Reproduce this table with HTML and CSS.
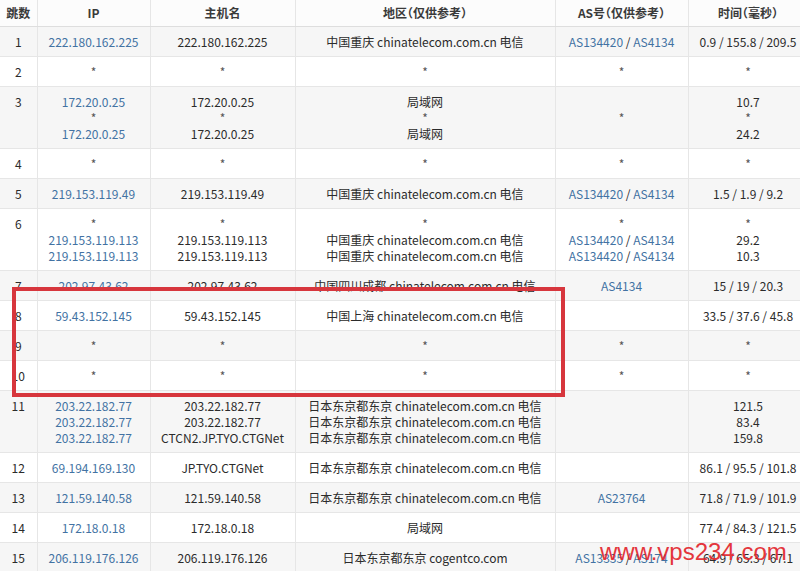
FILE: index.html
```html
<!DOCTYPE html>
<html>
	<head>
		<meta charset="utf-8">
		<title>路由追踪</title>
		<link rel="stylesheet" href="styles.css">
	</head>
	<body>
		<div class="trace">
			<table class="hops">
				<colgroup>
					<col class="c-hop">
					<col class="c-ip">
					<col class="c-host">
					<col class="c-region">
					<col class="c-as">
					<col class="c-time">
				</colgroup>
				<thead>
					<tr>
						<th>跳数</th>
						<th>IP</th>
						<th>主机名</th>
						<th>地区（仅供参考）</th>
						<th>AS号（仅供参考）</th>
						<th>时间（毫秒）</th>
					</tr>
				</thead>
				<tbody>
					<tr>
						<td>1</td>
						<td><a>222.180.162.225</a></td>
						<td>222.180.162.225</td>
						<td>中国重庆 chinatelecom.com.cn 电信</td>
						<td><a>AS134420</a> / <a>AS4134</a></td>
						<td>0.9 / 155.8 / 209.5</td>
					</tr>
					<tr>
						<td>2</td>
						<td class="star">*</td>
						<td class="star">*</td>
						<td class="star">*</td>
						<td class="star">*</td>
						<td class="star">*</td>
					</tr>
					<tr>
						<td>3</td>
						<td><a>172.20.0.25</a><br><span class="star">*</span><br><a>172.20.0.25</a></td>
						<td>172.20.0.25<br><span class="star">*</span><br>172.20.0.25</td>
						<td>局域网<br><span class="star">*</span><br>局域网</td>
						<td class="star">*</td>
						<td>10.7<br><span class="star">*</span><br>24.2</td>
					</tr>
					<tr>
						<td>4</td>
						<td class="star">*</td>
						<td class="star">*</td>
						<td class="star">*</td>
						<td class="star">*</td>
						<td class="star">*</td>
					</tr>
					<tr>
						<td>5</td>
						<td><a>219.153.119.49</a></td>
						<td>219.153.119.49</td>
						<td>中国重庆 chinatelecom.com.cn 电信</td>
						<td><a>AS134420</a> / <a>AS4134</a></td>
						<td>1.5 / 1.9 / 9.2</td>
					</tr>
					<tr>
						<td>6</td>
						<td><span class="star">*</span><br><a>219.153.119.113</a><br><a>219.153.119.113</a></td>
						<td><span class="star">*</span><br>219.153.119.113<br>219.153.119.113</td>
						<td><span class="star">*</span><br>中国重庆 chinatelecom.com.cn 电信<br>中国重庆 chinatelecom.com.cn 电信</td>
						<td><span class="star">*</span><br><a>AS134420</a> / <a>AS4134</a><br><a>AS134420</a> / <a>AS4134</a></td>
						<td><span class="star">*</span><br>29.2<br>10.3</td>
					</tr>
					<tr>
						<td>7</td>
						<td><a>202.97.43.62</a></td>
						<td>202.97.43.62</td>
						<td>中国四川成都 chinatelecom.com.cn 电信</td>
						<td><a>AS4134</a></td>
						<td>15 / 19 / 20.3</td>
					</tr>
					<tr>
						<td>8</td>
						<td><a>59.43.152.145</a></td>
						<td>59.43.152.145</td>
						<td>中国上海 chinatelecom.com.cn 电信</td>
						<td></td>
						<td>33.5 / 37.6 / 45.8</td>
					</tr>
					<tr>
						<td>9</td>
						<td class="star">*</td>
						<td class="star">*</td>
						<td class="star">*</td>
						<td class="star">*</td>
						<td class="star">*</td>
					</tr>
					<tr>
						<td>10</td>
						<td class="star">*</td>
						<td class="star">*</td>
						<td class="star">*</td>
						<td class="star">*</td>
						<td class="star">*</td>
					</tr>
					<tr>
						<td>11</td>
						<td><a>203.22.182.77</a><br><a>203.22.182.77</a><br><a>203.22.182.77</a></td>
						<td>203.22.182.77<br>203.22.182.77<br>CTCN2.JP.TYO.CTGNet</td>
						<td>日本东京都东京 chinatelecom.com.cn 电信<br>日本东京都东京 chinatelecom.com.cn 电信<br>日本东京都东京 chinatelecom.com.cn 电信</td>
						<td></td>
						<td>121.5<br>83.4<br>159.8</td>
					</tr>
					<tr>
						<td>12</td>
						<td><a>69.194.169.130</a></td>
						<td>JP.TYO.CTGNet</td>
						<td>日本东京都东京 chinatelecom.com.cn 电信</td>
						<td></td>
						<td>86.1 / 95.5 / 101.8</td>
					</tr>
					<tr>
						<td>13</td>
						<td><a>121.59.140.58</a></td>
						<td>121.59.140.58</td>
						<td>日本东京都东京 chinatelecom.com.cn 电信</td>
						<td><a>AS23764</a></td>
						<td>71.8 / 71.9 / 101.9</td>
					</tr>
					<tr>
						<td>14</td>
						<td><a>172.18.0.18</a></td>
						<td>172.18.0.18</td>
						<td>局域网</td>
						<td></td>
						<td>77.4 / 84.3 / 121.5</td>
					</tr>
					<tr>
						<td>15</td>
						<td><a>206.119.176.126</a></td>
						<td>206.119.176.126</td>
						<td>日本东京都东京 cogentco.com</td>
						<td><a>AS13335</a> / <a>AS174</a></td>
						<td>64.9 / 65.3 / 67.1</td>
					</tr>
				</tbody>
			</table>
			<div class="mark-box"></div>
			<div class="watermark">www.vps234.com</div>
		</div>
	</body>
</html>
```
FILE: styles.css
```css
* {
	box-sizing: border-box;
}

body {
	margin: 0;
	overflow: hidden;
	background-color: #fff;
	font-family: 'Noto Sans CJK SC', 'Noto Sans', sans-serif;
	font-size: 12px;
	color: #2b2b2b;
}

.trace {
	position: relative;
	width: 808px;
}

.hops {
	width: 808px;
	table-layout: fixed;
	border-collapse: collapse;
}

.c-hop { width: 37px; }
.c-ip { width: 113px; }
.c-host { width: 145px; }
.c-region { width: 260px; }
.c-as { width: 133px; }
.c-time { width: 120px; }

.hops th,
.hops td {
	border: 1px solid #e6e6e6;
	text-align: center;
	line-height: 16px;
	white-space: nowrap;
	overflow: hidden;
}
.hops th:first-child,
.hops td:first-child {
	border-left: none;
}
.hops tr:first-child th {
	border-top: none;
}

.hops th {
	padding: 5px 4px;
	font-size: 12px;
	font-weight: bold;
	font-feature-settings: "halt";
	color: #3a3a3a;
	background-color: #fcfcfc;
	border-bottom-color: #dedede;
}

.hops td {
	padding: 7px 4px 6px;
	vertical-align: middle;
}
.hops td:first-child {
	vertical-align: top;
}
.hops tbody tr:nth-child(odd) td {
	background-color: #f6f6f6;
}

.hops a {
	color: #4272a3;
	text-decoration: none;
}

.star {
	color: #555;
	font-size: 12px;
}

.mark-box {
	position: absolute;
	left: 12px;
	top: 287px;
	width: 553px;
	height: 110px;
	border: 4px solid #d7363d;
}

.watermark {
	position: absolute;
	left: 600px;
	top: 538px;
	font-family: 'Liberation Sans', Arial, sans-serif;
	font-size: 24px;
	line-height: 28px;
	color: #e3262e;
	opacity: 0.92;
}
```
